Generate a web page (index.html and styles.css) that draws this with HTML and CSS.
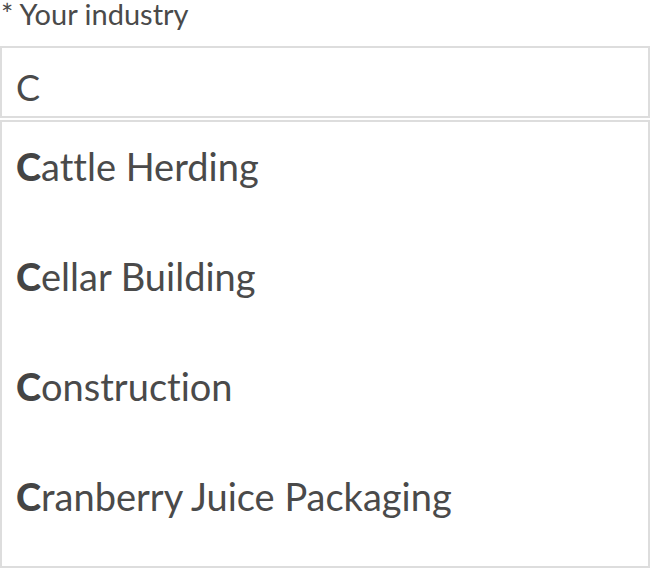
FILE: index.html
```html
<!DOCTYPE html>
<html>
<head>
<meta charset="utf-8">
<link rel="stylesheet" href="styles.css">
</head>
<body>
<div class="field">
  <label class="label">* Your industry</label>
  <div class="input">C</div>
  <ul class="list">
    <li class="item"><b>C</b>attle Herding</li>
    <li class="item"><b>C</b>ellar Building</li>
    <li class="item"><b>C</b>onstruction</li>
    <li class="item"><b>C</b>ranberry Juice Packaging</li>
  </ul>
</div>
</body>
</html>
```
FILE: styles.css
```css
html, body {
  margin: 0;
  padding: 0;
  background: #fff;
}
.field {
  width: 650px;
  font-family: "Lato", "Noto Sans", sans-serif;
  font-variant-ligatures: none;
  color: #4a4a4a;
}
.label {
  display: block;
  height: 46px;
  font-size: 29px;
  line-height: 32px;
  padding-left: 1px;
  margin-top: -2px;
  margin-bottom: 2px;
}
.input {
  box-sizing: border-box;
  height: 72px;
  border: 2px solid #dddddd;
  font-size: 36px;
  line-height: 78px;
  padding-left: 14px;
}
.list {
  box-sizing: border-box;
  list-style: none;
  margin: 2px 0 0;
  padding: 0;
  height: 448px;
  border: 2px solid #dddddd;
}
.item {
  height: 110px;
  line-height: 88px;
  padding-left: 14px;
  font-size: 38px;
}
.item b {
  font-weight: 900;
  color: #444;
}
```
